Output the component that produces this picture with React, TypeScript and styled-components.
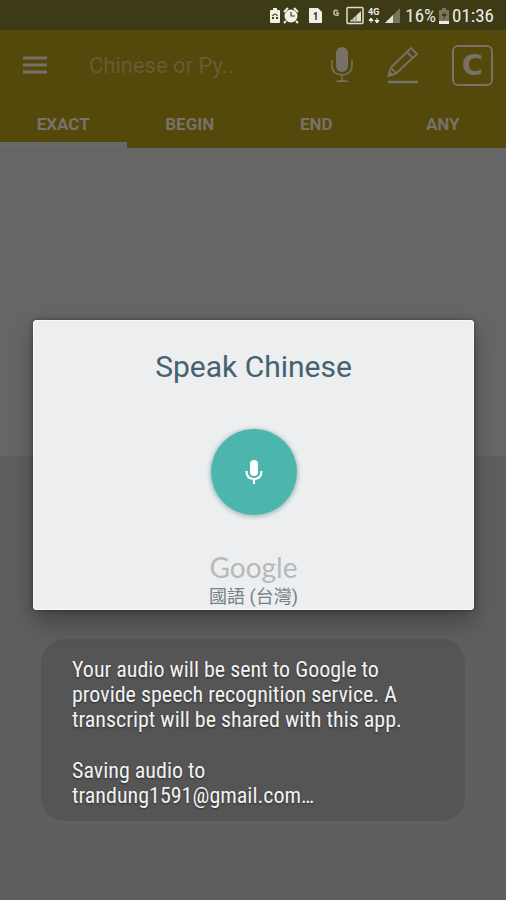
import React from "react";
import styled, { createGlobalStyle } from "styled-components";

const GlobalStyle = createGlobalStyle`
  *, *::before, *::after { box-sizing: border-box; }
  body { margin: 0; background: #5d605f; font-family: Roboto, "Liberation Sans", sans-serif; }
  button { border: 0; padding: 0; background: none; color: inherit; font: inherit; cursor: pointer; }
  svg { display: block; }
`;

const Screen = styled.div`
  position: relative;
  display: flex;
  flex-direction: column;
  min-height: 100vh;
`;

const StatusBar = styled.div`
  display: flex;
  align-items: center;
  justify-content: flex-end;
  gap: 3px;
  height: 30px;
  padding: 2px 12px 0 0;
  background: #3c3b15;
  color: #ecece4;
  font-family: "Roboto Condensed", Roboto, sans-serif;
  font-size: 19px;
  line-height: 28px;
`;

const StatusIcons = styled.div`
  display: flex;
  align-items: center;
  margin-right: 1px;
`;

const Header = styled.header`
  background: #54490b;
  color: #777168;
`;

const Toolbar = styled.div`
  display: flex;
  align-items: center;
  height: 70px;
  padding: 0 13px 0 23px;
`;

const SearchInput = styled.input`
  flex: 1;
  min-width: 0;
  margin-left: 42px;
  padding: 0;
  border: 0;
  outline: 0;
  background: none;
  color: #777168;
  font: 22px Roboto, sans-serif;
  &::placeholder { color: #675c33; opacity: 1; }
`;

const Actions = styled.div`
  display: flex;
  align-items: center;
  gap: 34px;
`;

const LetterButton = styled.button`
  && {
    width: 41px;
    height: 41px;
    border: 2px solid #777168;
    border-radius: 6px;
    font: 700 29px/36px "DejaVu Sans", sans-serif;
  }
`;

const Tabs = styled.div`
  display: grid;
  grid-template-columns: repeat(4, 1fr);
`;

const Tab = styled.button<{ $active?: boolean }>`
  && {
    height: 48px;
    padding-top: 6px;
    border-bottom: 6px solid ${(p) => (p.$active ? "#686868" : "transparent")};
    font-size: 17px;
    font-weight: 700;
  }
`;

const Results = styled.main`
  flex: 41;
  background: #666666;
`;

const Details = styled.section`
  flex: 59;
  background: #5d605f;
`;

const Overlay = styled.div`
  position: absolute;
  inset: 30px 0 0;
  display: flex;
  align-items: center;
  padding: 0 32px;
`;

const Dialog = styled.div`
  flex: 1;
  display: flex;
  flex-direction: column;
  align-items: center;
  margin: 0 0 0 1px;
  padding-top: 27px;
  border: 1px solid #f8f9fa;
  border-radius: 3px;
  background: #eceef0;
  box-shadow: 0 12px 24px rgba(0, 0, 0, 0.3), 0 0 4px rgba(0, 0, 0, 0.4);
`;

const Title = styled.h1`
  margin: 0;
  color: #45626f;
  font-size: 30px;
  font-weight: 400;
  line-height: 38px;
`;

const SpeakButton = styled.button`
  && {
    display: grid;
    place-items: center;
    width: 86px;
    height: 86px;
    margin: 43px 0 36px;
    border-radius: 50%;
    background: #4db6ac;
    box-shadow: 0 1px 4px 1px rgba(40, 110, 100, 0.4);
  }
`;

const Brand = styled.div`
  color: #b7b9ba;
  font: 28px/32px Lato, sans-serif;
`;

const Language = styled.div`
  padding-top: 2px;
  color: #71828a;
  font: 18px/24px Roboto, "Noto Sans CJK TC", sans-serif;
`;

const Toast = styled.div`
  position: absolute;
  left: 41px;
  right: 41px;
  bottom: 79px;
  padding: 18px 31px 13px;
  border-radius: 24px;
  background: #555555;
  color: #f2f2f2;
  font-family: "Roboto Condensed", Roboto, sans-serif;
  font-size: 22px;
  line-height: 25px;
  text-shadow: 0 1px 2px rgba(0, 0, 0, 0.5);
`;

const Paragraph = styled.p`
  margin: 0;
  & + & { margin-top: 26px; }
`;

const NotificationIcons = () => (
  <svg width="133" height="20" viewBox="0 0 133 20" aria-hidden="true">
    <g fill="#f0f0e8">
      <path d="M3 4h2V2h4v2h2q1 0 1 1v11q0 1-1 1H3q-1 0-1-1V5q0-1 1-1z" />
      <path d="M42 2h8l4 4v11H42q-1 0-1-1V3q0-1 1-1z" />
      <circle cx="23" cy="10" r="6.500" />
      <path d="M16 6l4-4M26 2l4 4M18 15l-2 2M28 15l2 2" stroke="#f0f0e8" strokeWidth="2" />
    </g>
    <path d="M4.500 10q2.500-4 5 0" stroke="#3c3b15" strokeWidth="1.200" fill="none" />
    <path d="M4 11h2v2H4zM8 11h2v2H8z" fill="#3c3b15" />
    <path d="M23 6v4h4" stroke="#3c3b15" strokeWidth="1.200" fill="none" />
    <path d="M46 8l2-1v7" stroke="#3c3b15" strokeWidth="1.500" fill="none" />
    <path d="M70 5q-4-2-4 1.500T70 9V7h-2" stroke="#b9b8a6" strokeWidth="1.700" fill="none" />
    <rect x="79" y="1.500" width="16" height="16" rx="1" fill="none" stroke="#dedecf" strokeWidth="1.500" />
    <path d="M81.500 15.500L93 5v10.500z" fill="#deded2" />
    <path d="M85 5v10M88 5v10" stroke="#3c3b15" strokeWidth=".6" />
    <text x="100" y="9" fill="#f0f0e8" fontFamily="Roboto" fontWeight="700" fontSize="9">4G</text>
    <path d="M103 17v-5M101 14.500l2-2.500 2 2.500zM109 12v5M107 14.500l2 2.500 2-2.500z" stroke="#f0f0e8" fill="#f0f0e8" strokeWidth="1" />
    <path d="M117 17L132 2v15z" fill="#77765a" />
    <path d="M117 17L125 9v8z" fill="#e2e2d5" />
  </svg>
);

const BatteryIcon = () => (
  <svg width="10" height="18" viewBox="0 0 10 18" aria-hidden="true">
    <path d="M0 3h3V1h4v2h3v11H0z" fill="#77765d" />
    <path d="M0 14h10v3H0z" fill="#ecece4" />
    <path d="M6 4L2.500 9H5l-1 4 4-6H5z" fill="#3c3b15" />
  </svg>
);

const MenuIcon = () => (
  <svg width="24" height="18" viewBox="0 0 24 18" stroke="currentColor" strokeWidth="3" aria-hidden="true">
    <path d="M0 2h24M0 9h24M0 16h24" />
  </svg>
);

const VoiceIcon = () => (
  <svg width="22" height="36" viewBox="0 0 22 36" fill="none" stroke="currentColor" aria-hidden="true">
    <rect x="5" y="0" width="12" height="25" rx="6" fill="currentColor" stroke="none" />
    <path d="M1 13v6q0 8 10 9 10-1 10-9v-6M11 28v6" strokeWidth="1.500" />
    <path d="M4 35q1-2 7-2t7 2z" fill="currentColor" stroke="none" />
  </svg>
);

const PencilIcon = () => (
  <svg width="31" height="38" viewBox="0 0 31 38" fill="none" stroke="currentColor" strokeWidth="1.800" aria-hidden="true">
    <path d="M1.500 30L4 21.500 24 2l6 6L9 27.500zM20 6l6 6M4 21.500l5 6" strokeLinejoin="round" />
    <path d="M1.500 30l1-4 2.500 3z" fill="currentColor" />
    <path d="M1 36h30" strokeWidth="2.500" />
  </svg>
);

const MicIcon = () => (
  <svg width="18" height="26" viewBox="0 0 18 26" fill="none" stroke="#fff" aria-hidden="true">
    <rect x="5" y="1" width="8" height="16" rx="4" fill="#fff" stroke="none" />
    <path d="M1.500 12q0 8 7.500 8t7.500-8M9 20v5" strokeWidth="2.200" />
  </svg>
);

const matchModes = ["EXACT", "BEGIN", "END", "ANY"];

export default function App() {
  return (
    <Screen>
      <GlobalStyle />
      <StatusBar>
        <StatusIcons><NotificationIcons /></StatusIcons>
        <span>16%</span>
        <BatteryIcon />
        <time>01:36</time>
      </StatusBar>
      <Header>
        <Toolbar>
          <button type="button" aria-label="Menu"><MenuIcon /></button>
          <SearchInput type="text" aria-label="Search" placeholder="Chinese or Py.." />
          <Actions>
            <button type="button" aria-label="Voice search"><VoiceIcon /></button>
            <button type="button" aria-label="Handwriting"><PencilIcon /></button>
            <LetterButton type="button" aria-label="Clear">C</LetterButton>
          </Actions>
        </Toolbar>
        <Tabs role="tablist">
          {matchModes.map((mode, i) => (
            <Tab key={mode} type="button" role="tab" aria-selected={i === 0} $active={i === 0}>{mode}</Tab>
          ))}
        </Tabs>
      </Header>
      <Results />
      <Details />
      <Toast role="status">
        <Paragraph>
          Your audio will be sent to Google to<br />
          provide speech recognition service. A<br />
          transcript will be shared with this app.
        </Paragraph>
        <Paragraph>
          Saving audio to<br />
          trandung1591@gmail.com…
        </Paragraph>
      </Toast>
      <Overlay>
        <Dialog role="dialog" aria-labelledby="speak-title">
          <Title id="speak-title">Speak Chinese</Title>
          <SpeakButton type="button" aria-label="Start listening"><MicIcon /></SpeakButton>
          <Brand>Google</Brand>
          <Language lang="zh-TW">國語 (台灣)</Language>
        </Dialog>
      </Overlay>
    </Screen>
  );
}
